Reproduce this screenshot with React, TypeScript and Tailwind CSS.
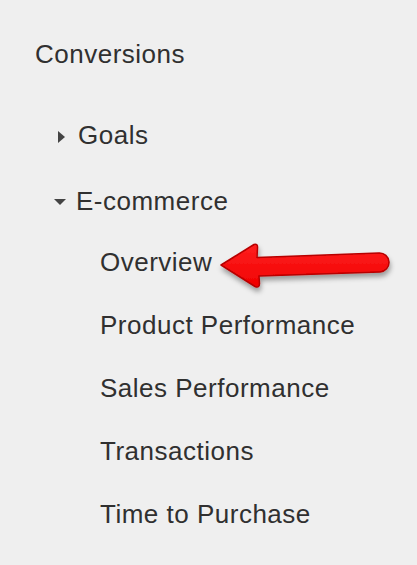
const subItems = ["Overview", "Product Performance", "Sales Performance", "Transactions", "Time to Purchase"];

function Arrow() {
    return (
        <svg
            className="absolute left-[215px] top-[235px]"
            width="185"
            height="65"
            viewBox="215 235 185 65"
        >
            <defs>
                <linearGradient id="arrowFill" x1="0" y1="0" x2="0" y2="1">
                    <stop offset="0%" stopColor="#ff2020" />
                    <stop offset="100%" stopColor="#f00000" />
                </linearGradient>
                <filter id="arrowShadow" x="-10%" y="-30%" width="120%" height="170%">
                    <feDropShadow dx="1" dy="4" stdDeviation="2.5" floodColor="#000" floodOpacity="0.35" />
                </filter>
            </defs>
            <path
                d="M221,265 L254,244.5 Q258,243.5 257.5,248 L257,257.5 L379,253 A9.5,9.5 0 0 1 380,272 L259,276 L259.5,283.5 Q259.5,288.5 255,286.5 Z"
                fill="url(#arrowFill)"
                stroke="#b80000"
                strokeWidth="1.5"
                strokeLinejoin="round"
                filter="url(#arrowShadow)"
            />
        </svg>
    );
}

export default function App() {
    return (
        <div
            className="relative h-[565px] w-full overflow-hidden bg-[#efefef] pl-[35px] pt-[39px] text-[26px] leading-[30px] tracking-[0.5px] text-[#303030]"
            style={{ fontFamily: '"Liberation Sans", Arial, sans-serif' }}
        >
            <p>Conversions</p>

            <div className="mt-[51px] flex items-center">
                <div className="ml-[23px] mr-[13px] mt-[4px] h-0 w-0 border-y-[6px] border-l-[7px] border-y-transparent border-l-[#444]" />
                <span>Goals</span>
            </div>

            <div className="mt-[36px] flex items-center">
                <div className="ml-[19px] mr-[10px] mt-[2px] h-0 w-0 border-x-[6px] border-t-[6px] border-x-transparent border-t-[#444]" />
                <span>E-commerce</span>
            </div>

            <div className="ml-[65px] mt-[31px] flex flex-col gap-[33px]">
                {subItems.map((item) => (
                    <p key={item}>{item}</p>
                ))}
            </div>

            <Arrow />
        </div>
    );
}
